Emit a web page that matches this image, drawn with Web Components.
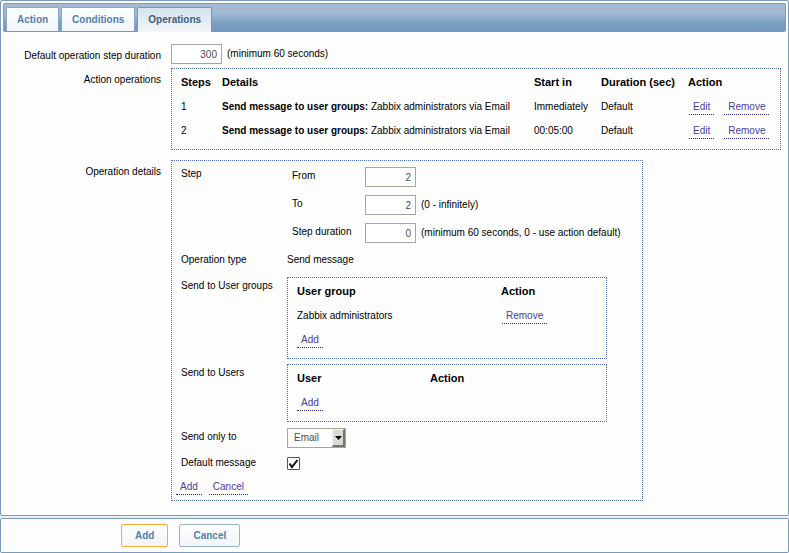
<!DOCTYPE html>
<html lang="en">
<head>
<meta charset="utf-8">
<title>Action operations</title>
<style>
  body { margin: 0; background: #e8eef4; color: #000; font: 10px/16px "Liberation Sans", Arial, sans-serif; }
</style>
</head>
<body>
<action-editor></action-editor>

<template id="t-action-editor">
  <style>
    :host { display: flex; flex-direction: column; gap: 2px; }
  </style>
  <framed-panel>
    <tab-bar>
      <tab-item>Action</tab-item>
      <tab-item>Conditions</tab-item>
      <tab-item selected>Operations</tab-item>
    </tab-bar>
    <operations-form></operations-form>
  </framed-panel>
  <framed-panel>
    <button-row>
      <push-button primary>Add</push-button>
      <push-button>Cancel</push-button>
    </button-row>
  </framed-panel>
</template>

<template id="t-framed-panel">
  <style>
    :host { display: block; border: 1px solid #7b9ab9; border-radius: 2px; background: #fdfdfd; }
  </style>
  <slot></slot>
</template>

<template id="t-tab-bar">
  <style>
    :host { display: flex; align-items: flex-end; gap: 2px; margin: 2px; height: 24px; padding: 3px 2px 0;
      border: 1px solid #7d9dbf; border-radius: 2px; border-bottom-color: #7398bd;
      background: linear-gradient(#a5bad3 0, #a2b9d2 35%, #789dc1 75%, #769bc0 100%); }
  </style>
  <slot></slot>
</template>

<template id="t-tab-item">
  <style>
    :host { display: block; }
    button { display: block; height: 24px; margin: 0; padding: 0 10px; border: 1px solid #8aa7c7; border-bottom: 0;
      border-radius: 2px 2px 0 0; background: linear-gradient(#fdfefe, #f1f5f9); color: #5280ab; font: inherit; font-weight: bold; }
    :host([selected]) button { height: 25px; margin-bottom: -1px; border-color: #7698bc;
      background: linear-gradient(#d6e2ee, #f2f6f9); color: #40617f; }
  </style>
  <button type="button"><slot></slot></button>
</template>

<template id="t-button-row">
  <style>
    :host { display: flex; gap: 11px; padding: 5px 120px; }
  </style>
  <slot></slot>
</template>

<template id="t-push-button">
  <style>
    :host { display: block; }
    button { display: block; height: 23px; padding: 0 13px; border: 1px solid #9bb3cd; border-radius: 2px;
      background: linear-gradient(#fdfefe, #f1f5f9); color: #5280ab; font: inherit; font-weight: bold; }
    :host([primary]) button { border-color: #fbab36; }
  </style>
  <button type="button"><slot></slot></button>
</template>

<template id="t-form-row">
  <style>
    :host { display: grid; grid-template-columns: var(--label-width, 160px) minmax(0, 1fr); column-gap: 10px; }
    .label { text-align: var(--label-align, right); padding-top: var(--label-top, 4px); white-space: nowrap; }
  </style>
  <div class="label"><slot name="label"></slot></div>
  <div><slot></slot></div>
</template>

<template id="t-dotted-box">
  <style>
    :host { display: block; border: 1px dotted #4f6cb8; padding: 1px 9px 7px; }
    :host([fit]) { width: fit-content; }
  </style>
  <slot></slot>
</template>

<template id="t-link-action">
  <style>
    :host { display: inline-block; vertical-align: top; }
    button { display: block; height: 16px; padding: 1px 4px 0; border: 0; border-bottom: 1px dotted #33278c;
      background: none; color: #483d9b; font: inherit; line-height: 14px; }
  </style>
  <button type="button"><slot></slot></button>
</template>

<template id="t-operations-form">
  <style>
    :host { display: flex; flex-direction: column; padding: 10px 7px 14px 0; }
    input, select { box-sizing: border-box; margin: 0; border: 1px solid #a9a698; border-radius: 0; background: #fff; color: #4d4d4d; font: inherit; }
    .number { width: 51px; height: 20px; padding: 0 4px; text-align: right; }
    .control { display: flex; align-items: center; gap: 5px; }
    .operations { margin-top: 4px; }
    .details { margin-top: 10px; }
    table { border-collapse: collapse; width: 100%; }
    th, td { box-sizing: border-box; height: 24px; padding: 0; text-align: left; line-height: 14px; vertical-align: middle; }
    th { font-size: 11px; }
    td { padding-top: 2px; }
    .operations table { table-layout: fixed; }
    .users { width: 320px; box-sizing: border-box; }
    td link-action { margin: 1px 0; }
    td.links-cell { padding-left: 1px; }
    td.links-cell link-action + link-action { margin-left: 10px; }
    .inner { display: flex; flex-direction: column; padding-top: 3px; --label-width: 96px; --label-align: left; --label-top: 1px; }
    .steps { display: grid; grid-template-columns: 68px auto; column-gap: 5px; row-gap: 8px; padding: 2px 12px 0 5px; }
    .steps label { padding-top: 1px; }
    .type { margin-top: 8px; }
    .type output { display: block; padding-top: 1px; }
    .groups { margin-top: 9px; }
    .people { margin-top: 5px; }
    .media, .message { margin-top: 6px; }
    .select { position: relative; width: 59px; height: 20px; display: flex; }
    select { appearance: none; width: 100%; padding: 0 16px 0 6px; }
    .arrow { position: absolute; right: 1px; top: 1px; bottom: 1px; width: 13px; box-sizing: border-box; pointer-events: none;
      background: #dcdad5; border: 1px solid; border-color: #f2f1ee #77756f #77756f #f2f1ee; border-right-width: 2px; border-bottom-width: 2px;
      display: flex; align-items: center; justify-content: center; }
    .tick { position: relative; display: block; width: 13px; height: 13px; margin-top: 3px; }
    .tick input { appearance: none; display: block; width: 13px; height: 13px; border: 1px solid #55544f; border-radius: 1px; }
    .tick svg { position: absolute; left: 0; top: 0; display: none; pointer-events: none; }
    .tick input:checked + svg { display: block; }
    .foot { display: flex; gap: 7px; margin: 8px 0 -2px -5px; }
  </style>
  <form-row>
    <label slot="label" for="duration">Default operation step duration</label>
    <div class="control"><input class="number" id="duration" value="300"><span>(minimum 60 seconds)</span></div>
  </form-row>
  <form-row class="operations">
    <span slot="label">Action operations</span>
    <dotted-box>
      <table>
        <colgroup><col style="width:41px"><col><col style="width:67px"><col style="width:87px"><col style="width:83px"></colgroup>
        <thead><tr><th>Steps</th><th>Details</th><th>Start in</th><th>Duration (sec)</th><th>Action</th></tr></thead>
        <tbody>
          <tr><td>1</td><td><b>Send message to user groups:</b> Zabbix administrators via Email</td><td>Immediately</td><td>Default</td>
            <td class="links-cell"><link-action>Edit</link-action><link-action>Remove</link-action></td></tr>
          <tr><td>2</td><td><b>Send message to user groups:</b> Zabbix administrators via Email</td><td>00:05:00</td><td>Default</td>
            <td class="links-cell"><link-action>Edit</link-action><link-action>Remove</link-action></td></tr>
        </tbody>
      </table>
    </dotted-box>
  </form-row>
  <form-row class="details">
    <span slot="label">Operation details</span>
    <dotted-box fit>
      <div class="inner">
        <form-row>
          <span slot="label">Step</span>
          <div class="steps">
            <label for="from">From</label><div class="control"><input class="number" id="from" value="2"></div>
            <label for="to">To</label><div class="control"><input class="number" id="to" value="2"><span>(0 - infinitely)</span></div>
            <label for="step">Step duration</label><div class="control"><input class="number" id="step" value="0"><span>(minimum 60 seconds, 0 - use action default)</span></div>
          </div>
        </form-row>
        <form-row class="type">
          <label slot="label" for="type">Operation type</label>
          <output id="type">Send message</output>
        </form-row>
        <form-row class="groups">
          <span slot="label">Send to User groups</span>
          <dotted-box class="users">
            <table>
              <colgroup><col style="width:204px"><col></colgroup>
              <thead><tr><th>User group</th><th>Action</th></tr></thead>
              <tbody>
                <tr><td>Zabbix administrators</td><td class="links-cell"><link-action>Remove</link-action></td></tr>
                <tr><td colspan="2"><link-action>Add</link-action></td></tr>
              </tbody>
            </table>
          </dotted-box>
        </form-row>
        <form-row class="people">
          <span slot="label">Send to Users</span>
          <dotted-box class="users">
            <table>
              <colgroup><col style="width:133px"><col></colgroup>
              <thead><tr><th>User</th><th>Action</th></tr></thead>
              <tbody><tr><td colspan="2"><link-action>Add</link-action></td></tr></tbody>
            </table>
          </dotted-box>
        </form-row>
        <form-row class="media">
          <label slot="label" for="media">Send only to</label>
          <div class="select">
            <select id="media"><option>Email</option></select>
            <span class="arrow"><svg width="7" height="4" viewBox="0 0 7 4"><path d="M0 0h7L3.5 4z" fill="#000"/></svg></span>
          </div>
        </form-row>
        <form-row class="message">
          <label slot="label" for="message">Default message</label>
          <div class="tick">
            <input type="checkbox" id="message" checked>
            <svg width="13" height="13" viewBox="0 0 13 13"><path d="M2.500 6.500 5 10 10.500 3" fill="none" stroke="#111" stroke-width="2"/></svg>
          </div>
        </form-row>
        <div class="foot"><link-action>Add</link-action><link-action>Cancel</link-action></div>
      </div>
    </dotted-box>
  </form-row>
</template>

<script>
  const names = ["link-action", "dotted-box", "form-row", "push-button", "button-row", "tab-item", "tab-bar",
    "framed-panel", "operations-form", "action-editor"];
  for (const name of names) {
    customElements.define(name, class extends HTMLElement {
      constructor() {
        super();
        const template = document.getElementById("t-" + name);
        this.attachShadow({ mode: "open" }).append(template.content.cloneNode(true));
      }
    });
  }
</script>
</body>
</html>
